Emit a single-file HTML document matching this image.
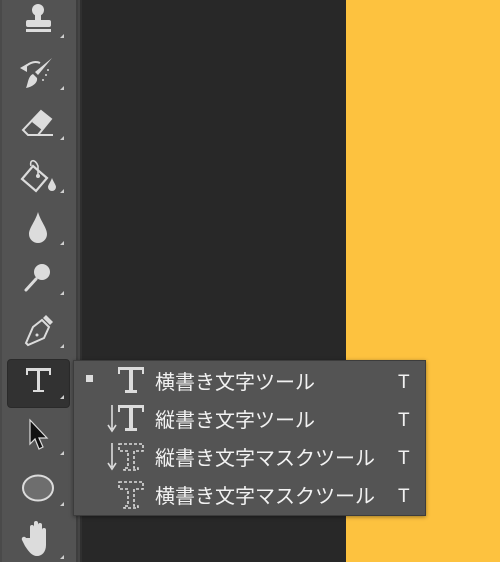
<!DOCTYPE html>
<html><head><style>
body{margin:0;width:500px;height:562px;overflow:hidden;background:#282828;position:relative;font-family:"Liberation Sans","Noto Sans CJK JP",sans-serif}
.tb{position:absolute;left:0;top:0;width:76px;height:562px;background:#535353;border-left:2px solid #4a4a4a;box-sizing:border-box}
.sep{position:absolute;left:76px;top:0;width:6px;height:562px;background:linear-gradient(90deg,#3e3e3e 0,#3e3e3e 2px,#454545 2px,#454545 4px,#303030 4px)}
.y{position:absolute;left:346px;top:0;width:154px;height:562px;background:#fdc23f}
.sel{position:absolute;left:7px;top:359px;width:63px;height:49px;background:#323232;border:1px solid #2a2a2a;border-radius:4px;box-sizing:border-box}
.menu{position:absolute;left:73px;top:360px;width:353px;height:156px;background:#545454;border:1px solid #3c3c3c;box-sizing:border-box;box-shadow:0 1px 4px rgba(0,0,0,.4)}
.it{position:absolute;left:81px;color:#f2f2f2;font-size:20px;line-height:22px}
.k{position:absolute;left:324px;color:#f2f2f2;font-size:19px;line-height:22px}
svg{position:absolute;left:0;top:0}
</style></head><body>
<div class="tb"></div><div class="sep"></div><div class="y"></div>
<div class="sel"></div>
<svg width="80" height="562" fill="#dcdcdc">
<circle cx="38" cy="10" r="6"/><rect x="35" y="12" width="6" height="10"/><rect x="26" y="20" width="25" height="7" rx="2"/><rect x="26" y="29" width="25" height="3"/>
<path d="M52 58 L38 75 L35 72 Z"/><path d="M33 74 C28 76 28 84 26 88 C32 87 38 83 37 78 Z"/><path d="M20 68 L27 64 L27 72 Z"/><path d="M25 67 C30 62 36 61 40 63" stroke="#dcdcdc" stroke-width="2" fill="none"/>
<circle cx="48" cy="70" r="1"/><circle cx="46" cy="75" r="1"/><circle cx="43" cy="80" r="1"/>
<path d="M41 111 L51 119 L38 135 L28 135 L23 130 Z" fill="none" stroke="#dcdcdc" stroke-width="2"/><path d="M41 111 L51 119 L42 130 L32 122 Z"/><rect x="38" y="134" width="15" height="2"/>
<path d="M33 166 L47 178 L36 191 L22 179 Z" fill="none" stroke="#dcdcdc" stroke-width="2.2"/><path d="M31 166 C29 160 35 158 38 166 L38 176" fill="none" stroke="#dcdcdc" stroke-width="1.6"/><circle cx="38" cy="176" r="2"/><path d="M52 178 C50 183 48 185 48 187 A3.5 3.5 0 0 0 56 187 C56 185 54 183 52 178Z"/>
<path d="M38 212 C35 222 29 228 29 234 A9 9 0 0 0 47 234 C47 228 41 222 38 212Z"/>
<circle cx="42" cy="272" r="8"/><path d="M36 279 L26 290" stroke="#dcdcdc" stroke-width="3" stroke-linecap="round"/>
<path d="M42 320 L49 327 L44 338 L28 345 L26 343 L33 327 Z" fill="none" stroke="#dcdcdc" stroke-width="2"/><path d="M43 318 L46 315 L53 322 L50 325 Z"/><circle cx="37" cy="335" r="1.5"/>
<path d="M26 368 H51 V375 H49 V371 H40 V390 H44 V392 H33 V390 H37 V371 H28 V375 H26 Z"/>
<path d="M30 420 L30 444 L35 439 L39 449 L43 447 L39 438 L47 438 Z" fill="#111" stroke="#dcdcdc" stroke-width="1.2"/>
<ellipse cx="38" cy="488" rx="15" ry="12.5" fill="#6e6e6e" stroke="#dcdcdc" stroke-width="2"/>
<path d="M30 538 V527 a2 2 0 0 1 4 0 V523 a2 2 0 0 1 4 0 V525 a2 2 0 0 1 4 0 V530 a2 2 0 0 1 4 0 V545 C46 552 42 556 37 556 C32 556 29 552 25 546 L22 540 a2 2 0 0 1 4 -2 Z"/>
<g fill="#cfcfcf">
<path d="M64 34 V38 H60 Z"/><path d="M64 86 V90 H60 Z"/><path d="M64 136 V140 H60 Z"/><path d="M64 189 V193 H60 Z"/><path d="M64 241 V245 H60 Z"/><path d="M64 291 V295 H60 Z"/><path d="M64 344 V348 H60 Z"/><path d="M64 395 V399 H60 Z"/><path d="M64 451 V455 H60 Z"/><path d="M64 502 V506 H60 Z"/><path d="M64 555 V559 H60 Z"/>
</g>
</svg>
<div class="menu">
<svg width="353" height="156" fill="#dcdcdc" style="left:-1px;top:-1px">
<rect x="13" y="15" width="7" height="7"/>
<path d="M45 7 H71 V14 H69 V10 H60 V30 H64 V33 H52 V30 H56 V10 H47 V14 H45 Z"/>
<path d="M45 45 H71 V52 H69 V48 H60 V68 H64 V71 H52 V68 H56 V48 H47 V52 H45 Z"/>
<path d="M39 45 V69 M35 65 L39 71 L43 65" stroke="#dcdcdc" stroke-width="1.6" fill="none"/>
<path d="M39 83 V107 M35 103 L39 109 L43 103" stroke="#dcdcdc" stroke-width="1.6" fill="none"/>
<g fill="none" stroke="#dcdcdc" stroke-width="1.6" stroke-dasharray="3 2">
<path d="M46 84 H70 V91 H61 V108 H65 V110 H51 V108 H55 V91 H46 Z"/>
<path d="M46 122 H70 V129 H61 V146 H65 V148 H51 V146 H55 V129 H46 Z"/>
</g>
</svg>
<div class="it" style="top:11px">横書き文字ツール</div><div class="k" style="top:11px">T</div>
<div class="it" style="top:49px">縦書き文字ツール</div><div class="k" style="top:49px">T</div>
<div class="it" style="top:87px">縦書き文字マスクツール</div><div class="k" style="top:87px">T</div>
<div class="it" style="top:125px">横書き文字マスクツール</div><div class="k" style="top:125px">T</div>
</div>
</body></html>
